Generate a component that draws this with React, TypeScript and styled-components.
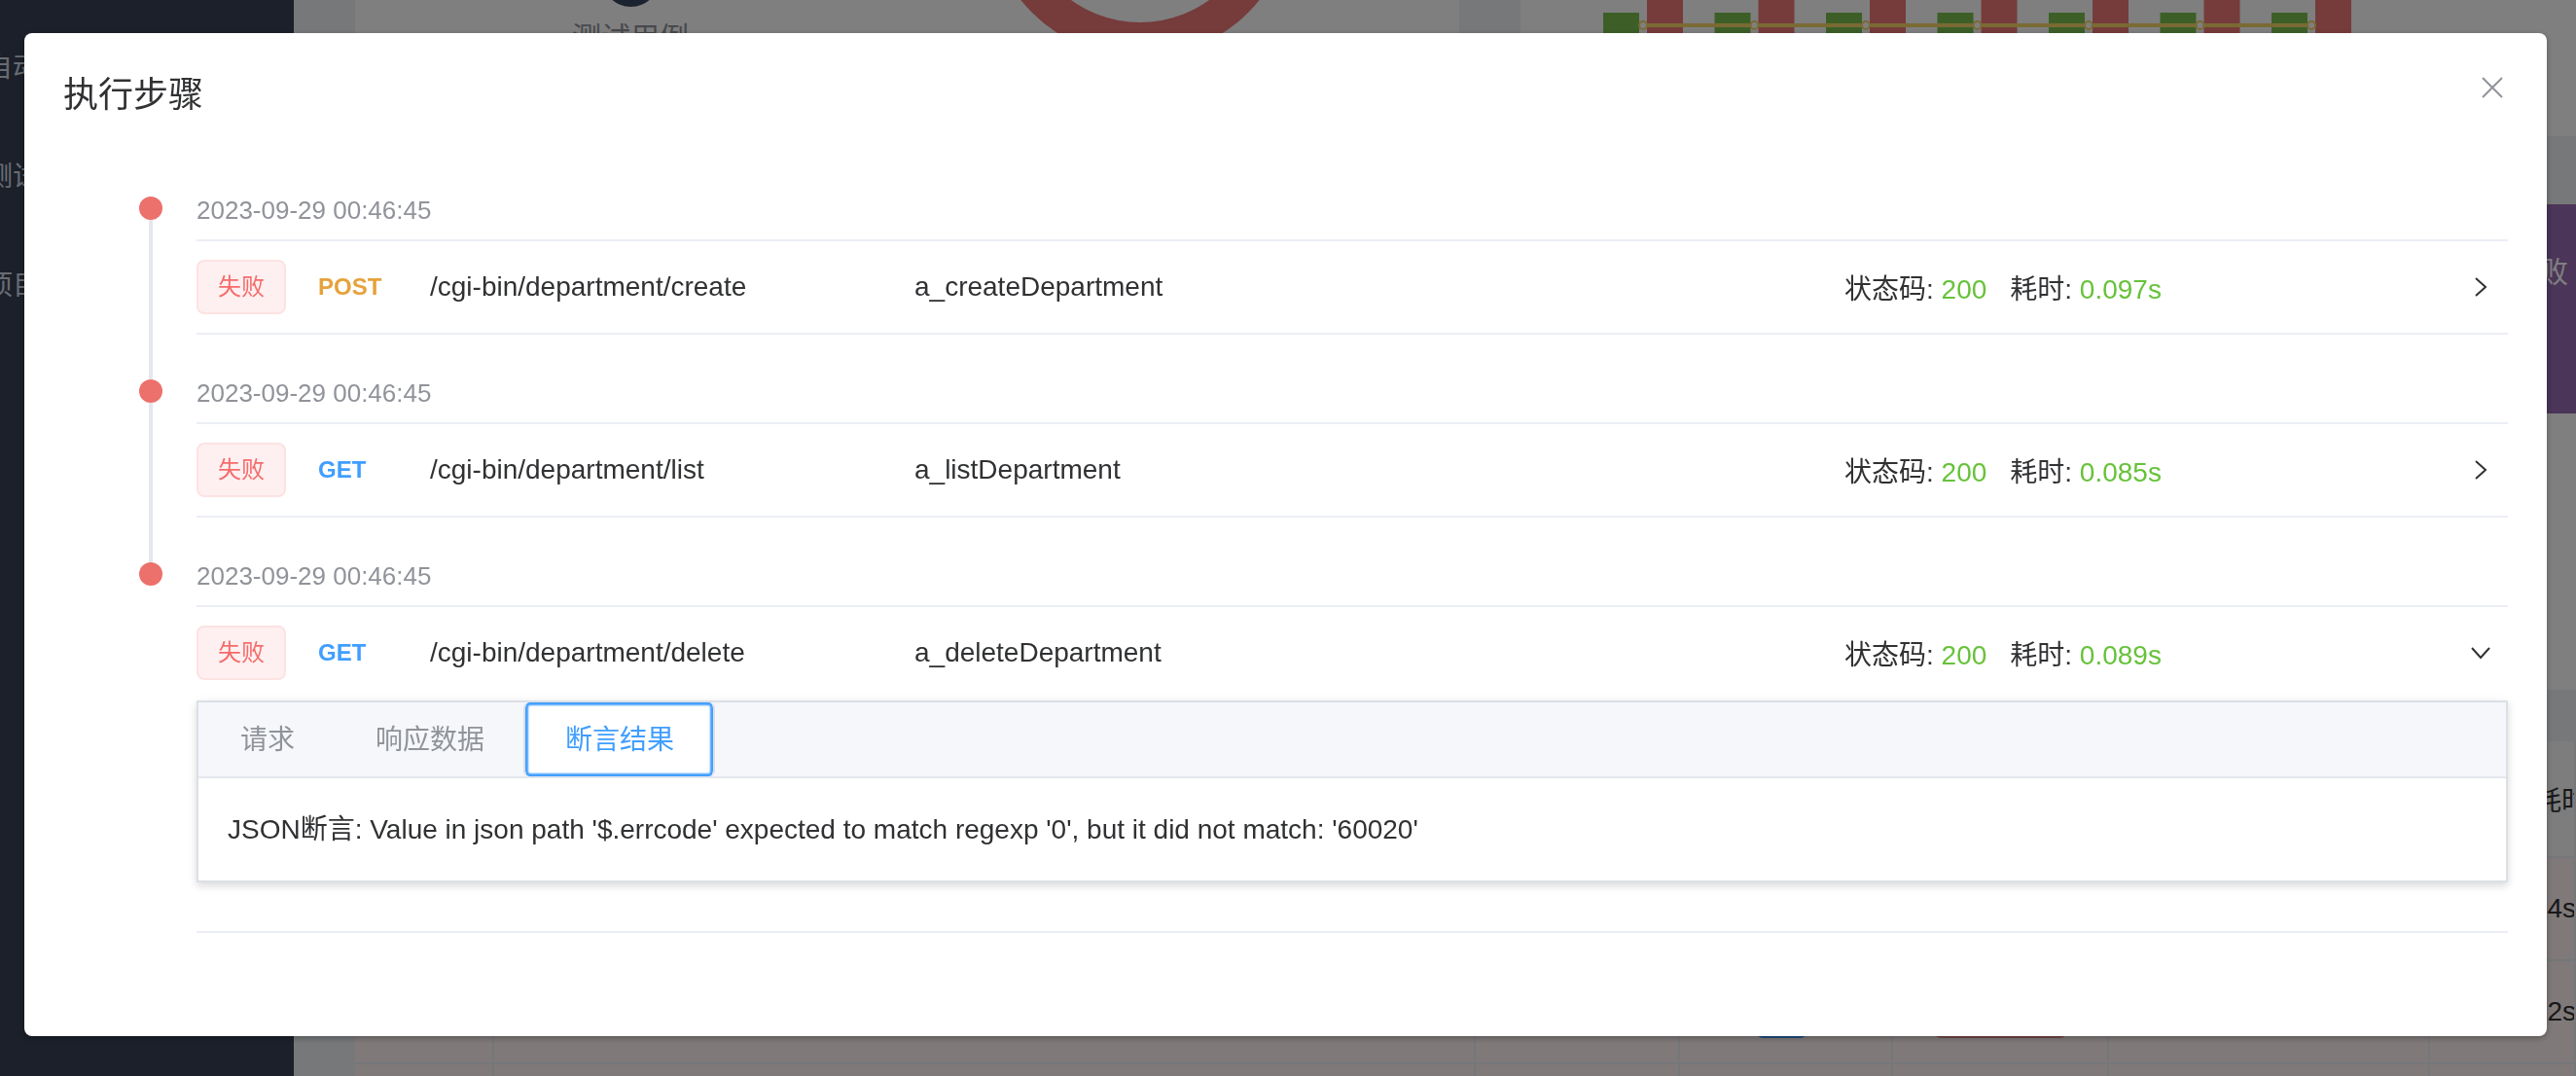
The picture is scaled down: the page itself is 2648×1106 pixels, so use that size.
import { useState } from "react";
import styled, { createGlobalStyle } from "styled-components";

const GlobalStyle = createGlobalStyle`
  * {
    box-sizing: border-box;
  }
  html,
  body {
    margin: 0;
    padding: 0;
  }
  body {
    width: 2648px;
    height: 1106px;
    overflow: hidden;
    font-family: "Liberation Sans", "Noto Sans CJK SC", sans-serif;
    color: #303133;
  }
`;

/* ---------- page behind the dialog ---------- */

const Page = styled.div`
  display: flex;
  width: 2648px;
  height: 1106px;
  overflow: hidden;
  background: #eef0f5;
`;

const Sidebar = styled.aside`
  flex: 0 0 302px;
  display: flex;
  flex-direction: column;
  padding-top: 11px;
  background: #364054;
  overflow: hidden;
`;

const MenuItem = styled.div`
  height: 112px;
  display: flex;
  align-items: center;
  margin-left: -15px;
  font-size: 28px;
  color: #d3d9e3;
  white-space: nowrap;
`;

const Main = styled.main`
  flex: 1;
  min-width: 0;
  display: flex;
  flex-direction: column;
  padding-left: 63px;
  margin-top: -80px;
`;

const TopRow = styled.div`
  flex: 0 0 220px;
  display: flex;
  gap: 63px;
  margin-bottom: 70px;
`;

const Card = styled.div`
  background: #fff;
  display: flex;
  align-items: flex-start;
  overflow: hidden;
`;

const SummaryCard = styled(Card)`
  flex: 0 0 1135px;
`;

const ChartCard = styled(Card)`
  flex: 1;
`;

const StatBlock = styled.div`
  margin-left: 183px;
  width: 200px;
  display: flex;
  flex-direction: column;
  align-items: center;
  padding-top: 28px;
`;

const StatIcon = styled.div`
  width: 59px;
  height: 59px;
  border-radius: 50%;
  background: #384660;
`;

const StatLabel = styled.div`
  margin-top: 14px;
  font-size: 30px;
  line-height: 36px;
  color: #909399;
`;

const Donut = styled.svg`
  margin-left: 264px;
  flex-shrink: 0;
`;

const MidRow = styled.div`
  flex: 0 0 215px;
  display: flex;
  gap: 63px;
`;

const BlankCard = styled.div`
  flex: 1;
  background: #fff;
`;

const FailCard = styled.div`
  flex: 0 0 420px;
  display: flex;
  justify-content: flex-end;
  padding: 52px 8px 0 0;
  background: #966ab0;
  color: #fff;
  font-size: 30px;
  line-height: 36px;
`;

const TableCard = styled.div`
  flex: 1;
  display: flex;
  flex-direction: column;
  background: #fff;
`;

const Toolbar = styled.div`
  flex: 0 0 284px;
`;

const FilterBand = styled.div`
  flex: 0 0 53px;
  background: #eef0f3;
`;

const TableRow = styled.div<{ $head?: boolean }>`
  flex: 0 0 ${(p) => (p.$head ? 120 : 106)}px;
  display: grid;
  grid-template-columns: 143px 1009px 210px 219px 222px 330px 1fr;
  background: ${(p) => (p.$head ? "#fafafa" : "#fef2f2")};
  border-bottom: 2px solid #ebeef5;
`;

const TableCell = styled.div<{ $pad?: number }>`
  display: flex;
  align-items: center;
  padding-left: ${(p) => p.$pad ?? 79}px;
  border-right: 2px solid #ebeef5;
  font-size: 28px;
  color: #303133;
  white-space: nowrap;
  overflow: hidden;
`;

const CellTag = styled.span<{ $color: string; $width: number }>`
  width: ${(p) => p.$width}px;
  height: 54px;
  border-radius: 6px;
  background: ${(p) => p.$color};
`;

/* ---------- dialog ---------- */

const Overlay = styled.div`
  position: fixed;
  inset: 0;
  display: flex;
  align-items: flex-start;
  padding: 34px 0 0 25px;
  background: rgba(0, 0, 0, 0.5);
`;

const Dialog = styled.div`
  width: 2593px;
  background: #fff;
  border-radius: 8px;
  box-shadow: 0 2px 6px rgba(0, 0, 0, 0.3);
`;

const DialogHeader = styled.div`
  display: flex;
  align-items: flex-start;
  justify-content: space-between;
  padding: 40px 40px 20px;
`;

const DialogTitle = styled.span`
  font-size: 36px;
  line-height: 48px;
  color: #303133;
`;

const CloseButton = styled.button`
  width: 32px;
  height: 32px;
  padding: 0;
  border: 0;
  background: none;
  display: flex;
  align-items: center;
  justify-content: center;
  cursor: pointer;
`;

const DialogBody = styled.div`
  padding: 60px 40px;
`;

const Timeline = styled.ul`
  list-style: none;
  margin: 0;
  padding: 0 0 0 78px;
`;

const TimelineItem = styled.li`
  display: grid;
  grid-template-columns: 24px 1fr;
  column-gap: 35px;
`;

const Rail = styled.div`
  display: flex;
  flex-direction: column;
  align-items: center;
`;

const Dot = styled.span`
  flex: 0 0 24px;
  width: 24px;
  border-radius: 50%;
  background: #ec706b;
`;

const Tail = styled.span<{ $hidden: boolean }>`
  flex: 1;
  width: 4px;
  background: ${(p) => (p.$hidden ? "transparent" : "#e4e7ed")};
`;

const ItemBody = styled.div`
  min-width: 0;
  padding-bottom: 46px;
`;

const Timestamp = styled.div`
  padding-top: 1px;
  margin-bottom: 17px;
  font-size: 26px;
  line-height: 26px;
  color: #909399;
`;

const Collapse = styled.div`
  border-top: 2px solid #ebeef5;
`;

const StepHeader = styled.div<{ $open: boolean }>`
  height: 96px;
  display: grid;
  grid-template-columns: 125px 115px 498px 956px 1fr 24px;
  align-items: center;
  padding-right: 16px;
  border-bottom: 2px solid ${(p) => (p.$open ? "transparent" : "#ebeef5")};
  font-size: 28px;
  color: #303133;
  cursor: pointer;
`;

const FailTag = styled.span`
  justify-self: start;
  height: 56px;
  padding: 0 20px;
  border: 2px solid #fde2e2;
  border-radius: 8px;
  background: #fef0f0;
  color: #f56c6c;
  font-size: 24px;
  line-height: 52px;
`;

const Method = styled.span<{ $color: string }>`
  font-size: 24px;
  font-weight: bold;
  color: ${(p) => p.$color};
`;

const Cell = styled.span`
  white-space: nowrap;
`;

const Status = styled.span`
  white-space: nowrap;
`;

const Value = styled.span<{ $gap?: boolean }>`
  color: #67c23a;
  margin-right: ${(p) => (p.$gap ? "24px" : "0")};
`;

const Arrow = styled.svg<{ $open: boolean }>`
  display: block;
  transform: rotate(${(p) => (p.$open ? 90 : 0)}deg);
`;

const StepBody = styled.div`
  padding-bottom: 50px;
  border-bottom: 2px solid #ebeef5;
`;

const TabsPanel = styled.div`
  border: 2px solid #dcdfe6;
  background: #fff;
  box-shadow: 0 4px 8px 0 rgba(0, 0, 0, 0.12), 0 0 12px 0 rgba(0, 0, 0, 0.04);
`;

const TabsHeader = styled.div`
  display: flex;
  height: 78px;
  background: #f5f7fa;
  border-bottom: 2px solid #e4e7ed;
`;

const TabItem = styled.div<{ $active: boolean }>`
  height: 76px;
  padding: 0 40px 0 41px;
  line-height: 77px;
  font-size: 28px;
  border: 2px solid transparent;
  border-top: 0;
  border-bottom: 0;
  color: ${(p) => (p.$active ? "#409eff" : "#909399")};
  background: ${(p) => (p.$active ? "#fff" : "transparent")};
  border-left-color: ${(p) => (p.$active ? "#dcdfe6" : "transparent")};
  border-right-color: ${(p) => (p.$active ? "#dcdfe6" : "transparent")};
  box-shadow: ${(p) => (p.$active ? "inset 0 0 2px 3px #409eff" : "none")};
  border-radius: ${(p) => (p.$active ? "6px" : "0")};
  cursor: pointer;

  & + & {
    margin-left: -2px;
  }
`;

const TabContent = styled.div`
  padding: 30px;
  font-size: 28px;
  line-height: 45px;
  color: #303133;
`;

type Step = {
  time: string;
  method: "GET" | "POST";
  path: string;
  name: string;
  code: number;
  cost: string;
};

const steps: Step[] = [
  {
    time: "2023-09-29 00:46:45",
    method: "POST",
    path: "/cgi-bin/department/create",
    name: "a_createDepartment",
    code: 200,
    cost: "0.097s",
  },
  {
    time: "2023-09-29 00:46:45",
    method: "GET",
    path: "/cgi-bin/department/list",
    name: "a_listDepartment",
    code: 200,
    cost: "0.085s",
  },
  {
    time: "2023-09-29 00:46:45",
    method: "GET",
    path: "/cgi-bin/department/delete",
    name: "a_deleteDepartment",
    code: 200,
    cost: "0.089s",
  },
];

const methodColor = { GET: "#409eff", POST: "#e6a23c" };

const tabs = ["请求", "响应数据", "断言结果"];

function BarChart() {
  const xs = [0, 1, 2, 3, 4, 5, 6].map((i) => i * 114.5);
  return (
    <svg width="1085" height="220" viewBox="0 0 1085 220">
      {xs.map((x) => (
        <g key={x}>
          <rect x={85 + x} y={93} width={37} height={107} fill="#7abe4e" />
          <rect x={130 + x} y={40} width={37} height={160} fill="#ec7676" />
        </g>
      ))}
      <polyline
        points={xs.map((x) => `${126 + x},106`).join(" ")}
        fill="none"
        stroke="#f4d468"
        strokeWidth="4"
      />
      {xs.map((x) => (
        <circle key={x} cx={126 + x} cy={106} r={4} fill="#fff" stroke="#f4d468" strokeWidth="2" />
      ))}
    </svg>
  );
}

export default function App() {
  const [openIndex, setOpenIndex] = useState(2);
  const [activeTab, setActiveTab] = useState(2);

  return (
    <>
      <GlobalStyle />
      <Page>
        <Sidebar>
          <MenuItem>自动化测试</MenuItem>
          <MenuItem>测试计划</MenuItem>
          <MenuItem>项目管理</MenuItem>
        </Sidebar>
        <Main>
          <TopRow>
            <SummaryCard>
              <StatBlock>
                <StatIcon />
                <StatLabel>测试用例</StatLabel>
              </StatBlock>
              <Donut width="320" height="220" viewBox="0 0 320 220">
                <circle cx="160" cy="-18" r="139" fill="none" stroke="#ec7676" strokeWidth="36" />
              </Donut>
            </SummaryCard>
            <ChartCard>
              <BarChart />
            </ChartCard>
          </TopRow>
          <MidRow>
            <BlankCard />
            <FailCard>失败</FailCard>
          </MidRow>
          <TableCard>
            <Toolbar />
            <FilterBand />
            <TableRow $head>
              <TableCell />
              <TableCell />
              <TableCell />
              <TableCell />
              <TableCell />
              <TableCell />
              <TableCell>总耗时</TableCell>
            </TableRow>
            {["0.084s", "0.092s", "0.101s"].map((cost) => (
              <TableRow key={cost}>
                <TableCell />
                <TableCell />
                <TableCell />
                <TableCell>
                  <CellTag $color="#409eff" $width={51} />
                </TableCell>
                <TableCell $pad={43}>
                  <CellTag $color="#e58f8f" $width={135} />
                </TableCell>
                <TableCell />
                <TableCell $pad={66}>{cost}</TableCell>
              </TableRow>
            ))}
          </TableCard>
        </Main>
      </Page>

      <Overlay>
        <Dialog>
          <DialogHeader>
            <DialogTitle>执行步骤</DialogTitle>
            <CloseButton aria-label="关闭">
              <svg width="32" height="32" viewBox="0 0 32 32">
                <path d="M6 6 L26 26 M26 6 L6 26" stroke="#909399" strokeWidth="2" fill="none" />
              </svg>
            </CloseButton>
          </DialogHeader>
          <DialogBody>
            <Timeline>
              {steps.map((step, i) => {
                const open = openIndex === i;
                return (
                  <TimelineItem key={i}>
                    <Rail>
                      <Dot />
                      <Tail $hidden={i === steps.length - 1} />
                    </Rail>
                    <ItemBody>
                      <Timestamp>{step.time}</Timestamp>
                      <Collapse>
                        <StepHeader $open={open} onClick={() => setOpenIndex(open ? -1 : i)}>
                          <FailTag>失败</FailTag>
                          <Method $color={methodColor[step.method]}>{step.method}</Method>
                          <Cell>{step.path}</Cell>
                          <Cell>{step.name}</Cell>
                          <Status>
                            状态码: <Value $gap>{step.code}</Value>耗时: <Value>{step.cost}</Value>
                          </Status>
                          <Arrow $open={open} width="24" height="24" viewBox="0 0 24 24">
                            <polyline points="7,3 17,12 7,21" fill="none" stroke="#303133" strokeWidth="2" />
                          </Arrow>
                        </StepHeader>
                        {open && (
                          <StepBody>
                            <TabsPanel>
                              <TabsHeader>
                                {tabs.map((t, k) => (
                                  <TabItem key={t} $active={activeTab === k} onClick={() => setActiveTab(k)}>
                                    {t}
                                  </TabItem>
                                ))}
                              </TabsHeader>
                              <TabContent>
                                {activeTab === 2
                                  ? "JSON断言: Value in json path '$.errcode' expected to match regexp '0', but it did not match: '60020'"
                                  : ""}
                              </TabContent>
                            </TabsPanel>
                          </StepBody>
                        )}
                      </Collapse>
                    </ItemBody>
                  </TimelineItem>
                );
              })}
            </Timeline>
          </DialogBody>
        </Dialog>
      </Overlay>
    </>
  );
}
